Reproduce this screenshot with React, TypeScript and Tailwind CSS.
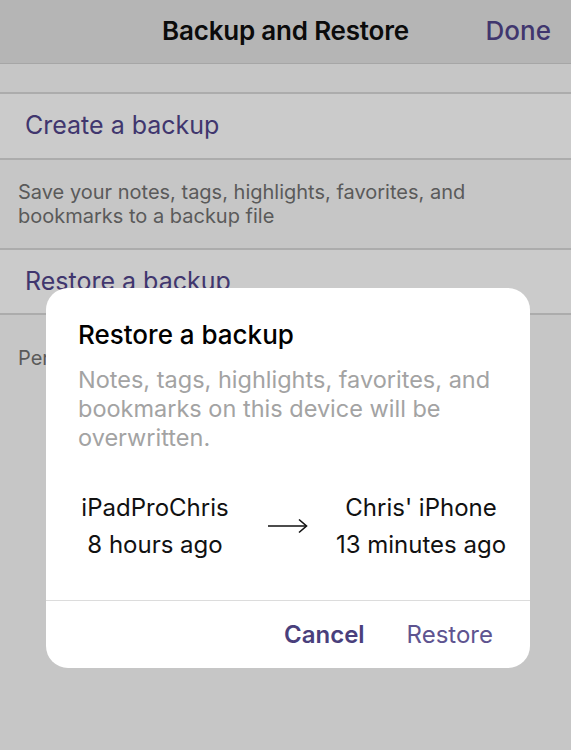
import React from "react";

export default function App() {
  const font = { fontFamily: "Inter, 'Noto Sans', sans-serif" };
  return (
    <div className="relative w-[571px] h-[750px] overflow-hidden bg-[#c6c6c6]" style={font}>
      {/* Header */}
      <div className="relative h-[64px] bg-[#b5b5b5] border-b border-[#a6a6a6] flex items-center justify-center pb-[3px]">
        <span className="text-[26px] font-semibold text-[#0b0b0b] tracking-[-0.2px]">Backup and Restore</span>
        <span className="absolute right-[20px] top-0 h-full flex items-center pb-[3px] text-[26px] font-medium text-[#40366e]">Done</span>
      </div>
      <div className="h-[30px] border-b-2 border-[#acacac]" />
      <div className="h-[66px] bg-[#cbcbcb] border-b-2 border-[#acacac] flex items-center pl-[25px]">
        <span className="text-[25px] text-[#40366e]">Create a backup</span>
      </div>
      <div className="h-[90px] border-b-2 border-[#acacac] px-[18px] pt-[20px] text-[20px] leading-[24px] text-[#5a5a5a]">
        Save your notes, tags, highlights, favorites, and
        <br />
        bookmarks to a backup file
      </div>
      <div className="h-[65px] bg-[#cbcbcb] border-b-2 border-[#acacac] flex items-center pl-[25px]">
        <span className="text-[25px] text-[#40366e]">Restore a backup</span>
      </div>
      <div className="px-[18px] pt-[31px] text-[20px] leading-[24px] text-[#5a5a5a]">
        Perform a restore from a backup file
      </div>

      {/* Modal */}
      <div className="absolute left-[46px] top-[288px] w-[484px] h-[380px] bg-white rounded-[22px] flex flex-col">
        <div className="px-[32px] pt-[31px]">
          <div className="text-[26px] leading-[32px] font-medium text-black">Restore a backup</div>
          <div className="mt-[14px] text-[23.5px] leading-[29px] text-[#a3a3a3] whitespace-nowrap">
            Notes, tags, highlights, favorites, and
            <br />
            bookmarks on this device will be
            <br />
            overwritten.
          </div>
        </div>
        <div className="mt-[37px] grid grid-cols-[218px_48px_218px] items-center text-[24px] leading-[37px] text-[#111]">
          <div className="text-center">
            <div>iPadProChris</div>
            <div>8 hours ago</div>
          </div>
          <div className="flex justify-center">
            <svg width="42" height="16" viewBox="0 0 42 16" fill="none">
              <line x1="1" y1="8" x2="39" y2="8" stroke="#111" strokeWidth="1.6" />
              <polyline points="32,1.5 39.5,8 32,14.5" stroke="#111" strokeWidth="1.6" fill="none" />
            </svg>
          </div>
          <div className="text-center">
            <div>Chris' iPhone</div>
            <div>13 minutes ago</div>
          </div>
        </div>
        <div className="mt-auto h-[68px] border-t border-[#dcdcdc] flex items-center justify-end pr-[37px] gap-[42px] text-[24px]">
          <span className="font-semibold text-[#4a3f7c]">Cancel</span>
          <span className="text-[#5e5490]">Restore</span>
        </div>
      </div>
    </div>
  );
}
